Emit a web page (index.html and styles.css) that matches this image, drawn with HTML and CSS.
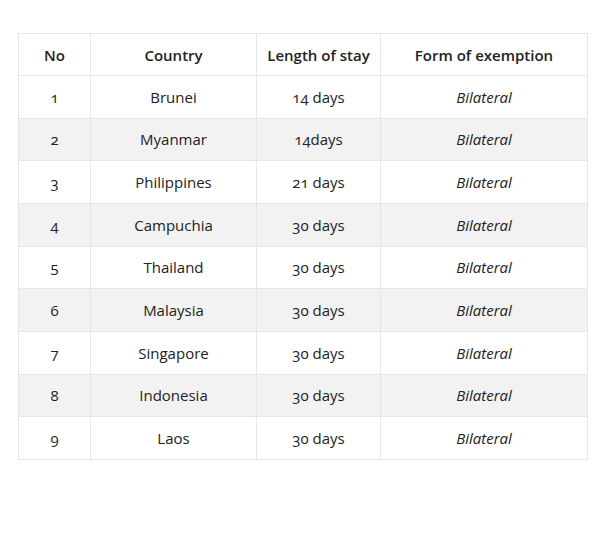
FILE: index.html
```html
<!DOCTYPE html>
<html>
<head>
<meta charset="utf-8">
<link rel="stylesheet" href="styles.css">
</head>
<body>
<div class="wrap">
<table class="visa">
<colgroup><col class="c1"><col class="c2"><col class="c3"><col class="c4"></colgroup>
<thead>
<tr><th>No</th><th>Country</th><th>Length of stay</th><th>Form of exemption</th></tr>
</thead>
<tbody>
<tr><td>1</td><td>Brunei</td><td>14 days</td><td><em>Bilateral</em></td></tr>
<tr><td>2</td><td>Myanmar</td><td>14days</td><td><em>Bilateral</em></td></tr>
<tr><td>3</td><td>Philippines</td><td>21 days</td><td><em>Bilateral</em></td></tr>
<tr><td>4</td><td>Campuchia</td><td>30 days</td><td><em>Bilateral</em></td></tr>
<tr><td>5</td><td>Thailand</td><td>30 days</td><td><em>Bilateral</em></td></tr>
<tr><td>6</td><td>Malaysia</td><td>30 days</td><td><em>Bilateral</em></td></tr>
<tr><td>7</td><td>Singapore</td><td>30 days</td><td><em>Bilateral</em></td></tr>
<tr><td>8</td><td>Indonesia</td><td>30 days</td><td><em>Bilateral</em></td></tr>
<tr><td>9</td><td>Laos</td><td>30 days</td><td><em>Bilateral</em></td></tr>
</tbody>
</table>
</div>
</body>
</html>
```
FILE: styles.css
```css
html, body { margin: 0; padding: 0; background: #fff; }
.wrap { padding: 33px 18px 0 18px; }
.visa {
  width: 569px;
  border-collapse: collapse;
  table-layout: fixed;
  font-family: "Open Sans", "Noto Sans", sans-serif;
  font-size: 15px;
  color: #222;
  font-variant-numeric: oldstyle-nums;
}
.c1 { width: 72px; }
.c2 { width: 166px; }
.c3 { width: 124px; }
.c4 { width: 207px; }
.visa th, .visa td {
  border: 1px solid #e3e6ea;
  text-align: center;
  vertical-align: middle;
  padding: 0 6px;
}
.visa th { font-weight: 600; height: 41px; }
.visa td { height: 41.67px; }
.visa tbody tr:nth-child(even) td { background: #f2f2f2; }
.visa em { font-style: italic; }
```
